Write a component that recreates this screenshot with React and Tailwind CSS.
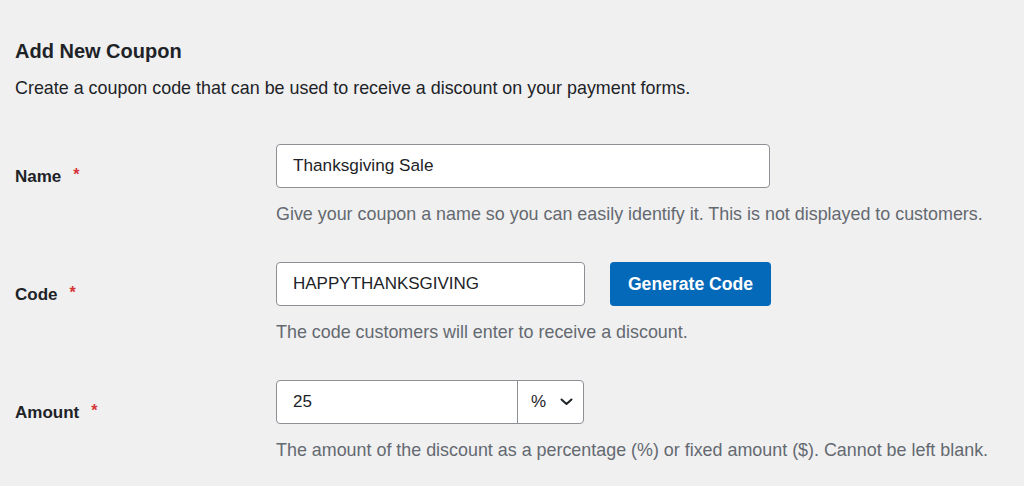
import React from "react";

const font = { fontFamily: '"Liberation Sans", Arial, sans-serif' };

function Label({ children }) {
  return (
    <div className="w-[261px] shrink-0 pt-[21px] flex items-start text-[17px] leading-[24px] font-bold text-[#1d2327]">
      <span>{children}</span>
      <span className="ml-[12px] text-[#d63638] text-[16px] leading-[20px]">*</span>
    </div>
  );
}

function Help({ children }) {
  return (
    <p className="mt-[14px] text-[17.9px] leading-[24px] text-[#646970]">{children}</p>
  );
}

export default function App() {
  return (
    <div className="w-[1024px] h-[486px] bg-[#f0f0f1] overflow-hidden pl-[15px] pt-[38px]" style={font}>
      <h1 className="text-[20px] leading-[26px] font-bold text-[#1d2327]">Add New Coupon</h1>
      <p className="mt-[12px] text-[17.9px] leading-[24px] text-[#1d2327]">
        Create a coupon code that can be used to receive a discount on your payment forms.
      </p>

      <div className="mt-[44px] flex flex-col gap-[36px]">
        <div className="flex">
          <Label>Name</Label>
          <div>
            <div className="w-[494px] h-[44px] bg-white border border-[#8c8f94] rounded-[4px] flex items-center pl-[16px] text-[17.2px] text-[#1d2327]">
              Thanksgiving Sale
            </div>
            <Help>Give your coupon a name so you can easily identify it. This is not displayed to customers.</Help>
          </div>
        </div>

        <div className="flex">
          <Label>Code</Label>
          <div>
            <div className="flex items-center gap-[25px]">
              <div className="w-[309px] h-[44px] bg-white border border-[#8c8f94] rounded-[4px] flex items-center pl-[16px] text-[17px] text-[#1d2327]">
                HAPPYTHANKSGIVING
              </div>
              <button className="w-[161px] h-[44px] bg-[#0469b9] rounded-[4px] text-white font-bold text-[17.6px]">
                Generate Code
              </button>
            </div>
            <Help>The code customers will enter to receive a discount.</Help>
          </div>
        </div>

        <div className="flex">
          <Label>Amount</Label>
          <div>
            <div className="w-[308px] h-[44px] bg-white border border-[#8c8f94] rounded-[4px] flex text-[17px] text-[#1d2327]">
              <div className="w-[241px] flex items-center pl-[16px] border-r border-[#8c8f94]">25</div>
              <div className="flex-1 flex items-center pl-[13px] gap-[14px]">
                <span>%</span>
                <svg width="13" height="8" viewBox="0 0 13 8" fill="none">
                  <path d="M1.5 1.5 L6.5 6 L11.5 1.5" stroke="#1d2327" strokeWidth="2" strokeLinecap="round" strokeLinejoin="round" />
                </svg>
              </div>
            </div>
            <Help>The amount of the discount as a percentage (%) or fixed amount ($). Cannot be left blank.</Help>
          </div>
        </div>
      </div>
    </div>
  );
}
